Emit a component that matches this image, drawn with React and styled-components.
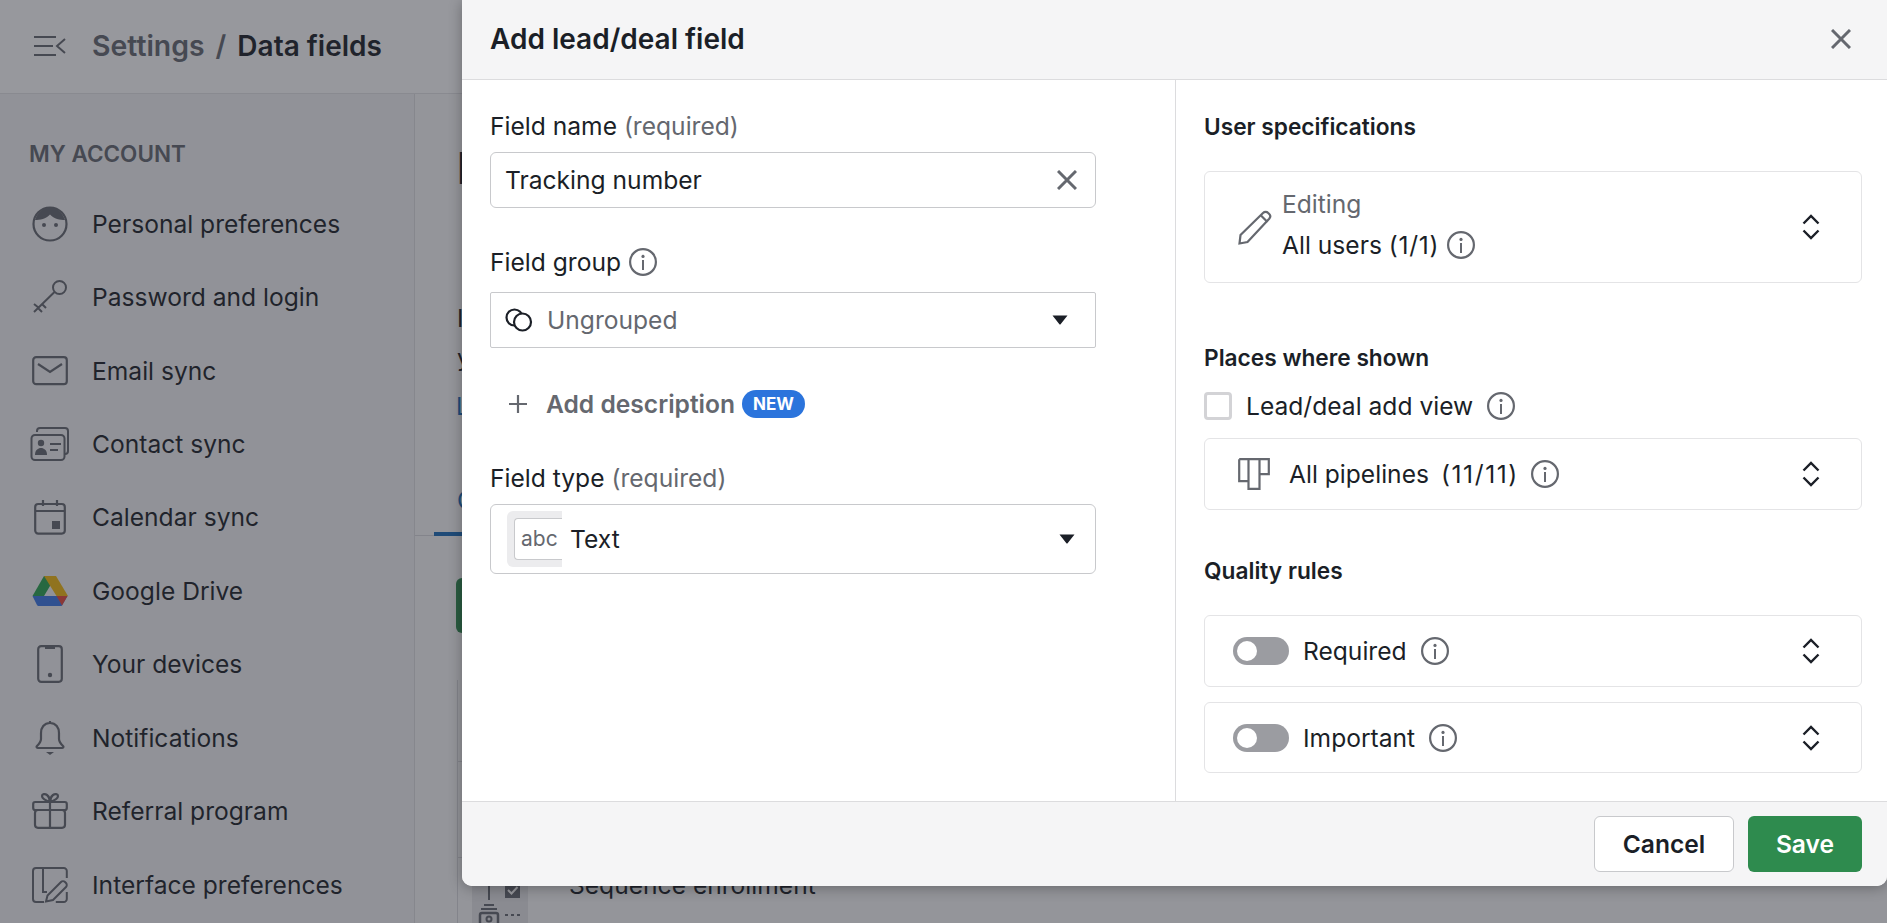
import styled, { createGlobalStyle } from "styled-components";

const GlobalStyle = createGlobalStyle`
    html, body {
        margin: 0;
        padding: 0;
        background: #fff;
    }
    body {
        font-family: "Inter", "Liberation Sans", sans-serif;
        color: #1b1f27;
    }
    * {
        box-sizing: border-box;
    }
`;

const Page = styled.div`
    position: relative;
    width: 100%;
    height: 100vh;
    overflow: hidden;
    display: flex;
    flex-direction: column;
`;

const TopBar = styled.header`
    flex: 0 0 94px;
    display: flex;
    align-items: center;
    padding: 0 0 2px 34px;
    background: #fff;
    border-bottom: 1px solid #e4e4e6;
    box-shadow: 0 1px 3px rgba(0, 0, 0, 0.08);
`;

const Crumb = styled.span`
    font-size: ${(p) => (p.$current ? 28 : 28.4)}px;
    font-weight: 600;
    color: ${(p) => (p.$current ? "#1b1f27" : "#65686f")};
    margin-left: ${(p) => p.$ml || 0}px;
`;

const Columns = styled.div`
    flex: 1;
    display: flex;
    min-height: 0;
`;

const Sidebar = styled.nav`
    flex: 0 0 415px;
    padding: 47px 0 0 29px;
    background: #f4f4f5;
    border-right: 1px solid #dedee0;
`;

const SidebarTitle = styled.div`
    font-size: 22.5px;
    font-weight: 600;
    line-height: 26px;
    color: #65686f;
    margin-bottom: 20px;
`;

const NavItem = styled.div`
    height: 73.45px;
    display: flex;
    align-items: center;
    padding-left: 1px;
    font-size: 24.6px;
    color: #1b1f27;
`;

const NavIcon = styled.span`
    flex: 0 0 40px;
    height: 40px;
    display: flex;
    align-items: center;
    justify-content: center;
    margin-right: 22px;
`;

const Main = styled.main`
    flex: 1;
    padding: 56px 0 0 43px;
    background: #fafafa;
    min-width: 0;
`;

const PageTitle = styled.div`
    font-size: 44px;
    font-weight: 700;
    line-height: 36px;
    margin-left: -1px;
`;

const Intro = styled.div`
    margin-top: 113px;
    margin-left: -1px;
    font-size: 24px;
    line-height: 39px;
`;

const IntroLink = styled.div`
    margin-top: 9.5px;
    margin-left: -2px;
    font-size: 24px;
    line-height: 39px;
    color: #1a6bb8;
`;

const Tabs = styled.div`
    margin: 47px 0 0 -43px;
    padding-left: 19px;
    height: 63px;
    border-bottom: 1px solid #d9d9dc;
`;

const Tab = styled.div`
    width: 120px;
    height: 63px;
    padding: 13px 0 0 23px;
    font-size: 24px;
    color: #1a6bb8;
    border-bottom: 4px solid #1a6bb8;
`;

const AddButton = styled.div`
    width: 160px;
    height: 55px;
    margin-top: 42px;
    margin-left: -2px;
    border-radius: 6px;
    background: #2e8b4e;
`;

const Table = styled.div`
    margin-top: 47px;
    margin-left: -1px;
    height: 300px;
    border-left: 1px solid #d9d9dc;
`;

const TableRow = styled.div`
    height: ${(p) => p.$h}px;
    border-bottom: 1px solid #d9d9dc;
`;

const SequenceRow = styled.div`
    display: flex;
    height: 100px;
`;

const RowHandle = styled.div`
    flex: 0 0 56px;
    height: 65px;
    margin-left: 14px;
    background: #e6e6e8;
`;

const RowName = styled.div`
    margin-left: 41px;
    margin-top: 9px;
    font-size: 24.6px;
    line-height: 36px;
    white-space: nowrap;
`;

const Overlay = styled.div`
    position: absolute;
    inset: 0;
    background: rgba(38, 40, 50, 0.48);
`;

const Modal = styled.section`
    position: absolute;
    top: 0;
    left: 462px;
    right: 0;
    height: 886px;
    display: flex;
    flex-direction: column;
    background: #fff;
    border-radius: 0 0 10px 10px;
    box-shadow: 0 2px 14px rgba(0, 0, 0, 0.3);
`;

const ModalHeader = styled.div`
    flex: 0 0 80px;
    display: flex;
    align-items: center;
    justify-content: space-between;
    padding: 0 36px 2px 28px;
    background: #f5f5f6;
    border-bottom: 1px solid #dcdcde;
`;

const ModalTitle = styled.h2`
    margin: 0;
    font-size: 28px;
    font-weight: 600;
    color: #1b1f27;
`;

const ModalBody = styled.div`
    flex: 1;
    display: flex;
    min-height: 0;
`;

const LeftColumn = styled.div`
    flex: 0 0 714px;
    padding: 30px 79px 0 28px;
    border-right: 1px solid #dcdcde;
`;

const RightColumn = styled.div`
    flex: 1;
    padding: 30px 25px 0 28px;
`;

const Label = styled.div`
    display: flex;
    align-items: center;
    gap: 8px;
    height: 32px;
    margin-top: ${(p) => p.$mt || 0}px;
    margin-bottom: ${(p) => p.$mb || 0}px;
    font-size: 24.6px;
    color: #1b1f27;
`;

const Hint = styled.span`
    color: #65686f;
`;

const Count = styled.span`
    margin-left: ${(p) => p.$ml || 0}px;
    letter-spacing: ${(p) => p.$ls}px;
`;

const InputBox = styled.div`
    height: ${(p) => p.$h}px;
    display: flex;
    align-items: center;
    justify-content: space-between;
    padding: ${(p) => p.$pad || "0 18px 0 14px"};
    background: #fff;
    border: 1px solid #c8c9cc;
    border-radius: ${(p) => p.$radius || 6}px;
    font-size: 24.6px;
`;

const InputValue = styled.div`
    display: flex;
    align-items: center;
    gap: ${(p) => p.$gap || 0}px;
    color: ${(p) => (p.$muted ? "#65686f" : "#1b1f27")};
`;

const AddDescription = styled.div`
    display: flex;
    align-items: center;
    height: 28px;
    margin: 42px 0 44px 19px;
    font-size: 24.6px;
    font-weight: 600;
    color: #65686f;
`;

const PlusMark = styled.span`
    display: flex;
    margin-right: 19px;
`;

const NewBadge = styled.span`
    height: 28px;
    margin-left: 7px;
    padding: 0 11px;
    display: flex;
    align-items: center;
    border-radius: 14px;
    background: #2b74dc;
    color: #fff;
    font-size: 17px;
    font-weight: 700;
`;

const TypeIcon = styled.span`
    width: 55px;
    height: 56px;
    padding: 7px 0 7px 7px;
    background: #ececee;
    border-radius: 6px 0 0 6px;
    display: flex;
`;

const TypeIconInner = styled.span`
    flex: 1;
    display: flex;
    align-items: center;
    padding-left: 6px;
    background: #fff;
    border: 1px solid #c8c9cc;
    border-right: 0;
    border-radius: 4px 0 0 4px;
    font-size: 21px;
    color: #65686f;
`;

const SectionTitle = styled.div`
    display: flex;
    align-items: center;
    height: 32px;
    margin-top: ${(p) => p.$mt || 0}px;
    margin-bottom: ${(p) => p.$mb || 0}px;
    font-size: 22.7px;
    font-weight: 600;
    color: #1b1f27;
`;

const RuleCard = styled.div`
    height: ${(p) => p.$h}px;
    margin-bottom: ${(p) => p.$mb || 0}px;
    display: flex;
    align-items: center;
    justify-content: space-between;
    padding: 0 41px 0 ${(p) => p.$pl || 33}px;
    border: 1px solid #e4e4e6;
    border-radius: 6px;
    font-size: 24.6px;
`;

const CardLead = styled.div`
    display: flex;
    align-items: center;
    gap: ${(p) => p.$gap || 14}px;
`;

const StackedText = styled.div`
    display: flex;
    flex-direction: column;
    gap: 10px;
    margin-top: -5px;
`;

const CheckRow = styled.div`
    display: flex;
    align-items: center;
    height: 28px;
    margin-bottom: 18px;
    font-size: 24.6px;
`;

const CheckBox = styled.span`
    width: 28px;
    height: 28px;
    margin-right: 14px;
    border: 3px solid #d3d3d6;
    border-radius: 4px;
    background: #fff;
`;

const Toggle = styled.span`
    width: 56px;
    height: 28px;
    padding: 4px;
    border-radius: 14px;
    background: #9b9ca1;
    display: flex;
`;

const ToggleKnob = styled.span`
    width: 20px;
    height: 20px;
    border-radius: 50%;
    background: #fff;
`;

const ModalFooter = styled.div`
    flex: 0 0 85px;
    display: flex;
    align-items: center;
    justify-content: flex-end;
    gap: 14px;
    padding: 0 25px 0 0;
    background: #f5f5f6;
    border-top: 1px solid #dcdcde;
    border-radius: 0 0 10px 10px;
`;

const FooterButton = styled.button`
    height: 56px;
    width: ${(p) => p.$w}px;
    padding: 0;
    border-radius: 6px;
    border: ${(p) => (p.$primary ? "0" : "1px solid #c8c9cc")};
    background: ${(p) => (p.$primary ? "#2e8b4e" : "#fff")};
    color: ${(p) => (p.$primary ? "#fff" : "#1b1f27")};
    font-family: inherit;
    font-size: 24.6px;
    font-weight: 600;
`;

const InfoIcon = ({ ml = 0 }) => (
    <svg width="28" height="28" viewBox="0 0 28 28" fill="none" style={ml ? { marginLeft: ml } : undefined}>
        <circle cx="14" cy="14" r="12.9" stroke="#65686f" strokeWidth="2.2" />
        <circle cx="14" cy="8.4" r="1.6" fill="#65686f" />
        <rect x="13" y="12" width="2" height="10" fill="#65686f" />
    </svg>
);

const CloseIcon = ({ color = "#65686f" }) => (
    <svg width="20" height="20" viewBox="0 0 20 20" fill="none">
        <path d="M1 1l18 18M19 1L1 19" stroke={color} strokeWidth="3" />
    </svg>
);

const Caret = () => (
    <svg width="16" height="10" viewBox="0 0 16 10">
        <path d="M0.5 0.5h15L8.8 9a1 1 0 0 1-1.6 0z" fill="#1b1f27" />
    </svg>
);

const Chevrons = () => (
    <svg width="18" height="26" viewBox="0 0 18 26" fill="none">
        <path d="M1.5 9.5L9 2l7.5 7.5M1.5 16.5L9 24l7.5-7.5" stroke="#1b1f27" strokeWidth="2.4" />
    </svg>
);

const MenuIcon = () => (
    <svg width="32" height="20" viewBox="0 0 32 20" fill="none" stroke="#65686f" strokeWidth="2">
        <path d="M0 1h22M0 10h19M0 19h22M31 3l-8 7 8 7" />
    </svg>
);

const icons = {
    face: (
        <svg width="36" height="36" viewBox="0 0 36 36" fill="none">
            <circle cx="18" cy="18" r="16.5" stroke="#65686f" strokeWidth="2.2" />
            <path d="M3 14C6 5 12 1.5 18 1.5S30 5 33 14c-5 0-11-1-15-5.5C14 13 8 14 3 14z" fill="#65686f" />
            <circle cx="12" cy="19" r="2" fill="#65686f" />
            <circle cx="24" cy="19" r="2" fill="#65686f" />
        </svg>
    ),
    key: (
        <svg width="36" height="36" viewBox="0 0 36 36" fill="none" stroke="#65686f" strokeWidth="2">
            <circle cx="27.5" cy="8.5" r="6.5" />
            <path d="M22.5 13L2 33M6 29l4 4M10 25l4 4M2 25l5 4" />
        </svg>
    ),
    mail: (
        <svg width="36" height="30" viewBox="0 0 36 30" fill="none" stroke="#65686f" strokeWidth="2.2">
            <rect x="1.2" y="1.2" width="33.6" height="27" rx="3" />
            <path d="M6 8l12 8 12-8" />
        </svg>
    ),
    contact: (
        <svg width="40" height="34" viewBox="0 0 40 34" fill="none" stroke="#65686f" strokeWidth="2">
            <path d="M7 5V4a3 3 0 0 1 3-3h25a3 3 0 0 1 3 3v20a3 3 0 0 1-3 3h-1" />
            <rect x="1.5" y="8" width="33" height="25" rx="3.5" />
            <circle cx="11" cy="16" r="3.2" fill="#65686f" stroke="none" />
            <path d="M5 28c0-5 3-7 6-7s6 2 6 7z" fill="#65686f" stroke="none" />
            <path d="M20 17h11M20 23h8" />
        </svg>
    ),
    calendar: (
        <svg width="32" height="36" viewBox="0 0 32 36" fill="none" stroke="#65686f" strokeWidth="2.2">
            <rect x="1.2" y="5" width="29.6" height="29.6" rx="3" />
            <path d="M1.2 12h29.6M9 1v6M23 1v6" />
            <rect x="18" y="22" width="8" height="8" fill="#65686f" stroke="none" />
        </svg>
    ),
    drive: (
        <svg width="36" height="32" viewBox="0 0 36 32">
            <path d="M12 1h12L12 21H0.5z" fill="#2aa34f" />
            <path d="M12 1h12l12 20H24.5z" fill="#f2b90f" />
            <path d="M0.5 21h35l-5.5 9.5a1.5 1.5 0 0 1-1.2.5H6.5a2 2 0 0 1-1.4-.7z" fill="#3b78e7" />
            <path d="M24.5 21h11l-5.5 9.5z" fill="#e8483b" />
        </svg>
    ),
    phone: (
        <svg width="26" height="38" viewBox="0 0 26 38" fill="none" stroke="#65686f" strokeWidth="2.2">
            <rect x="1.2" y="1.2" width="23.6" height="35.6" rx="3" />
            <path d="M8 2.5h10" strokeWidth="3" />
            <circle cx="13" cy="30" r="2.2" fill="#65686f" stroke="none" />
        </svg>
    ),
    bell: (
        <svg width="30" height="36" viewBox="0 0 30 36" fill="none" stroke="#65686f" strokeWidth="2.2">
            <path d="M15 3c-6 0-9 4.5-9 10v6c0 3-2 5-4 7-1 1 0 2 1 2h24c1 0 2-1 1-2-2-2-4-4-4-7v-6c0-5.5-3-10-9-10zM15 3V1" />
            <path d="M11 32h8l-4 3z" fill="#65686f" stroke="none" />
        </svg>
    ),
    gift: (
        <svg width="36" height="36" viewBox="0 0 36 36" fill="none" stroke="#65686f" strokeWidth="2.2">
            <rect x="1.2" y="9" width="33.6" height="8" rx="2" />
            <rect x="3" y="17" width="30" height="17.8" rx="3" />
            <path d="M18 9v26M18 9c-3-1-8-3-8-6 0-2 3-2.5 5-1 2 1.5 3 5 3 7zM18 9c3-1 8-3 8-6 0-2-3-2.5-5-1-2 1.5-3 5-3 7z" />
        </svg>
    ),
    interfacePrefs: (
        <svg width="36" height="36" viewBox="0 0 36 36" fill="none" stroke="#65686f" strokeWidth="2">
            <path d="M34.8 11V4a3 3 0 0 0-3-3H4a3 3 0 0 0-3 3v28a3 3 0 0 0 3 3h8M34.8 25v7a3 3 0 0 1-3 3h-8" />
            <path d="M11 1v24h4" />
            <path d="M14 34.5l1.5-6L29 15c1-1 3-1 4 0l1 1c1 1 1 3 0 4L21 33z" />
        </svg>
    ),
};

const navItems = [
    ["face", "Personal preferences"],
    ["key", "Password and login"],
    ["mail", "Email sync"],
    ["contact", "Contact sync"],
    ["calendar", "Calendar sync"],
    ["drive", "Google Drive"],
    ["phone", "Your devices"],
    ["bell", "Notifications"],
    ["gift", "Referral program"],
    ["interfacePrefs", "Interface preferences"],
];

const GroupIcon = () => (
    <svg width="28" height="24" viewBox="0 0 28 24" fill="none" stroke="#1b1f27" strokeWidth="2.2">
        <circle cx="9.5" cy="9.5" r="8" />
        <circle cx="17.5" cy="14" r="8.5" fill="#fff" />
    </svg>
);

const PencilIcon = () => (
    <svg width="34" height="35" viewBox="0 0 34 35" fill="none" stroke="#65686f" strokeWidth="2.2">
        <path d="M1.5 33.5l1-8.5L25 3c1.5-1.5 3.8-1.5 5.2 0l1 1c1.3 1.3 1.3 3.3 0 4.8L9.5 32z" />
        <path d="M23 5.5l6.5 6.5" />
    </svg>
);

const PipelineIcon = () => (
    <svg width="32" height="32" viewBox="0 0 32 32" fill="none" stroke="#65686f" strokeWidth="2.2">
        <path d="M1.2 1.2h29.6v15h-9.3M10.5 1.2v22H1.2v-22M10.5 1.2v29.6h11V1.2" />
    </svg>
);

const PlusIcon = () => (
    <svg width="18" height="18" viewBox="0 0 18 18" fill="none" stroke="#65686f" strokeWidth="2.2">
        <path d="M9 0v18M0 9h18" />
    </svg>
);

const HandleIcons = () => (
    <svg width="56" height="65" viewBox="0 0 56 65" fill="none">
        <path d="M17 20v22" stroke="#65686f" strokeWidth="2" />
        <rect x="33" y="25" width="15" height="15" fill="#65686f" />
        <path d="M36 32l3.5 3.5 6-6.5" stroke="#fff" strokeWidth="2" />
        <path d="M12 47h10M9 51h16" stroke="#65686f" strokeWidth="2" />
        <rect x="8" y="55" width="18" height="12" rx="2" stroke="#65686f" strokeWidth="2.5" />
        <circle cx="17" cy="61" r="2.5" stroke="#65686f" strokeWidth="2" />
        <path d="M33 57h3M39 57h3M45 57h3" stroke="#65686f" strokeWidth="2" />
    </svg>
);

const App = function () {
    return (
        <>
            <GlobalStyle />
            <Page>
                <TopBar>
                    <MenuIcon />
                    <Crumb $ml={26}>Settings</Crumb>
                    <Crumb $ml={11}>/</Crumb>
                    <Crumb $current $ml={11}>Data fields</Crumb>
                </TopBar>
                <Columns>
                    <Sidebar>
                        <SidebarTitle>MY ACCOUNT</SidebarTitle>
                        {navItems.map(([icon, label]) => (
                            <NavItem key={label}>
                                <NavIcon>{icons[icon]}</NavIcon>
                                {label}
                            </NavItem>
                        ))}
                    </Sidebar>
                    <Main>
                        <PageTitle>D</PageTitle>
                        <Intro>I<br />y</Intro>
                        <IntroLink>L</IntroLink>
                        <Tabs><Tab>C</Tab></Tabs>
                        <AddButton />
                        <Table>
                            <TableRow $h={82} />
                            <TableRow $h={96} />
                            <SequenceRow>
                                <RowHandle><HandleIcons /></RowHandle>
                                <RowName>Sequence enrollment</RowName>
                            </SequenceRow>
                        </Table>
                    </Main>
                </Columns>
                <Overlay />
                <Modal>
                    <ModalHeader>
                        <ModalTitle>Add lead/deal field</ModalTitle>
                        <CloseIcon />
                    </ModalHeader>
                    <ModalBody>
                        <LeftColumn>
                            <Label $mb={10}>
                                <span>Field name <Hint>(required)</Hint></span>
                            </Label>
                            <InputBox $h={56}>
                                <InputValue>Tracking number</InputValue>
                                <CloseIcon />
                            </InputBox>
                            <Label $mt={38} $mb={14}>
                                Field group <InfoIcon />
                            </Label>
                            <InputBox $h={56} $radius={2} $pad="0 27px 0 14px">
                                <InputValue $muted $gap={14}><GroupIcon />Ungrouped</InputValue>
                                <Caret />
                            </InputBox>
                            <AddDescription>
                                <PlusMark><PlusIcon /></PlusMark>
                                Add description
                                <NewBadge>NEW</NewBadge>
                            </AddDescription>
                            <Label $mb={10}>
                                <span>Field type <Hint>(required)</Hint></span>
                            </Label>
                            <InputBox $h={70} $pad="0 20px 1px 16px">
                                <InputValue $gap={8}>
                                    <TypeIcon><TypeIconInner>abc</TypeIconInner></TypeIcon>
                                    Text
                                </InputValue>
                                <Caret />
                            </InputBox>
                        </LeftColumn>
                        <RightColumn>
                            <SectionTitle $mb={29}>User specifications</SectionTitle>
                            <RuleCard $h={112}>
                                <CardLead $gap={10}>
                                    <PencilIcon />
                                    <StackedText>
                                        <Hint>Editing</Hint>
                                        <Label>
                                            <span>All users <Count $ls={0.7}>(1/1)</Count></span>
                                            <InfoIcon />
                                        </Label>
                                    </StackedText>
                                </CardLead>
                                <Chevrons />
                            </RuleCard>
                            <SectionTitle $mt={58} $mb={19}>Places where shown</SectionTitle>
                            <CheckRow>
                                <CheckBox />
                                Lead/deal add view
                                <InfoIcon ml={14} />
                            </CheckRow>
                            <RuleCard $h={72}>
                                <CardLead $gap={19}>
                                    <PipelineIcon />
                                    <Label>
                                        <span>All pipelines <Count $ml={5} $ls={1.6}>(11/11)</Count></span>
                                        <InfoIcon ml={4} />
                                    </Label>
                                </CardLead>
                                <Chevrons />
                            </RuleCard>
                            <SectionTitle $mt={44} $mb={29}>Quality rules</SectionTitle>
                            <RuleCard $h={72} $mb={15} $pl={28}>
                                <CardLead>
                                    <Toggle><ToggleKnob /></Toggle>
                                    <Label>Required <InfoIcon ml={6} /></Label>
                                </CardLead>
                                <Chevrons />
                            </RuleCard>
                            <RuleCard $h={71} $pl={28}>
                                <CardLead>
                                    <Toggle><ToggleKnob /></Toggle>
                                    <Label>Important <InfoIcon ml={6} /></Label>
                                </CardLead>
                                <Chevrons />
                            </RuleCard>
                        </RightColumn>
                    </ModalBody>
                    <ModalFooter>
                        <FooterButton $w={140}>Cancel</FooterButton>
                        <FooterButton $primary $w={114}>Save</FooterButton>
                    </ModalFooter>
                </Modal>
            </Page>
        </>
    );
};

export default App;
